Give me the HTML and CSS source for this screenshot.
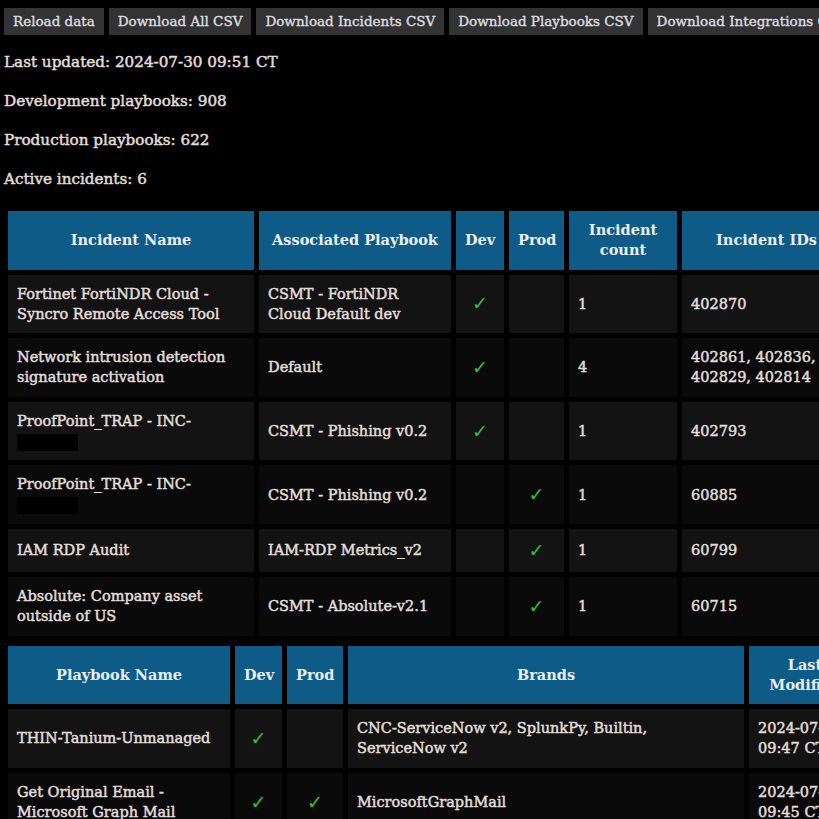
FILE: index.html
```html
<!DOCTYPE html>
<html lang="en">
<head>
<meta charset="utf-8">
<title>Playbook Dashboard</title>
<link rel="stylesheet" href="styles.css">
</head>
<body>
<div class="toolbar">
  <button class="btn">Reload data</button>
  <button class="btn">Download All CSV</button>
  <button class="btn">Download Incidents CSV</button>
  <button class="btn">Download Playbooks CSV</button>
  <button class="btn">Download Integrations CSV</button>
</div>
<p class="stat">Last updated: 2024-07-30 09:51 CT</p>
<p class="stat">Development playbooks: 908</p>
<p class="stat">Production playbooks: 622</p>
<p class="stat">Active incidents: 6</p>

<table class="grid grid-incidents">
  <thead>
    <tr>
      <th class="c-name">Incident Name</th>
      <th class="c-pb">Associated Playbook</th>
      <th class="c-dev">Dev</th>
      <th class="c-prod">Prod</th>
      <th class="c-count">Incident count</th>
      <th class="c-ids">Incident IDs</th>
    </tr>
  </thead>
  <tbody>
    <tr>
      <td>Fortinet FortiNDR Cloud - Syncro Remote Access Tool</td>
      <td>CSMT - FortiNDR Cloud Default dev</td>
      <td class="chk"><span class="tick">✓</span></td>
      <td class="chk"></td>
      <td>1</td>
      <td>402870</td>
    </tr>
    <tr>
      <td>Network intrusion detection signature activation</td>
      <td>Default</td>
      <td class="chk"><span class="tick">✓</span></td>
      <td class="chk"></td>
      <td>4</td>
      <td>402861, 402836, 402829, 402814</td>
    </tr>
    <tr>
      <td>ProofPoint_TRAP - INC-<span class="redact"></span></td>
      <td>CSMT - Phishing v0.2</td>
      <td class="chk"><span class="tick">✓</span></td>
      <td class="chk"></td>
      <td>1</td>
      <td>402793</td>
    </tr>
    <tr>
      <td>ProofPoint_TRAP - INC-<span class="redact"></span></td>
      <td>CSMT - Phishing v0.2</td>
      <td class="chk"></td>
      <td class="chk"><span class="tick">✓</span></td>
      <td>1</td>
      <td>60885</td>
    </tr>
    <tr>
      <td>IAM RDP Audit</td>
      <td>IAM-RDP Metrics_v2</td>
      <td class="chk"></td>
      <td class="chk"><span class="tick">✓</span></td>
      <td>1</td>
      <td>60799</td>
    </tr>
    <tr>
      <td>Absolute: Company asset outside of US</td>
      <td>CSMT - Absolute-v2.1</td>
      <td class="chk"></td>
      <td class="chk"><span class="tick">✓</span></td>
      <td>1</td>
      <td>60715</td>
    </tr>
  </tbody>
</table>

<table class="grid grid-playbooks">
  <thead>
    <tr>
      <th class="p-name">Playbook Name</th>
      <th class="p-dev">Dev</th>
      <th class="p-prod">Prod</th>
      <th class="p-brands">Brands</th>
      <th class="p-mod">Last Modified</th>
    </tr>
  </thead>
  <tbody>
    <tr>
      <td>THIN-Tanium-Unmanaged</td>
      <td class="chk"><span class="tick">✓</span></td>
      <td class="chk"></td>
      <td>CNC-ServiceNow v2, SplunkPy, Builtin, ServiceNow v2</td>
      <td>2024-07-30 09:47 CT</td>
    </tr>
    <tr>
      <td>Get Original Email - Microsoft Graph Mail</td>
      <td class="chk"><span class="tick">✓</span></td>
      <td class="chk"><span class="tick">✓</span></td>
      <td>MicrosoftGraphMail</td>
      <td>2024-07-30 09:45 CT</td>
    </tr>
    <tr>
      <td>Block Indicators - Generic v3</td>
      <td class="chk"><span class="tick">✓</span></td>
      <td class="chk"><span class="tick">✓</span></td>
      <td>Builtin</td>
      <td>2024-07-30 09:41 CT</td>
    </tr>
  </tbody>
</table>
</body>
</html>
```

FILE: styles.css
```css
html, body {
  background: #000;
}
body {
  margin: 0;
  padding: 8px 4px;
  color: #e0ddd8;
  font-family: "DejaVu Serif", "Liberation Serif", serif;
  font-size: 14.5px;
  -webkit-text-stroke: 0.5px currentColor;
}
.toolbar {
  display: flex;
  gap: 5px;
  margin-bottom: 1px;
}
.btn {
  flex-shrink: 0;
  background: #333;
  color: #dcdce0;
  border: none;
  border-radius: 0;
  padding: 5px 9px;
  font-family: "DejaVu Serif", "Liberation Serif", serif;
  font-size: 13.5px;
  line-height: 17px;
  white-space: nowrap;
  -webkit-text-stroke: 0.4px currentColor;
}
.stat {
  margin: 15px 0;
  font-size: 15.2px;
  line-height: 24px;
}
.grid {
  border-collapse: separate;
  border-spacing: 5px;
  table-layout: fixed;
  margin-left: -1px;
}
.grid th,
.grid td {
  box-sizing: border-box;
  padding: 9px;
  line-height: 20.3px;
  vertical-align: middle;
}
.grid th {
  background: #0e5b88;
  color: #e9eef2;
  font-weight: bold;
  text-align: center;
  -webkit-text-stroke: 0;
}
.grid td {
  text-align: left;
}
.grid tbody tr:nth-child(odd) td {
  background: #131313;
}
.grid tbody tr:nth-child(even) td {
  background: #0a0a0a;
}
.grid td.chk {
  text-align: center;
  line-height: 25px;
}
.tick {
  display: inline-block;
  height: 25px;
  line-height: 25px;
  vertical-align: top;
  color: #2ec52e;
  font-family: "DejaVu Sans", sans-serif;
  font-size: 19px;
  -webkit-text-stroke: 0;
}
.redact {
  display: inline-block;
  width: 61px;
  height: 17px;
  background: #000;
  vertical-align: middle;
}

.grid-incidents { width: 853px; }
.c-name { width: 246px; }
.c-pb { width: 192px; }
.c-dev { width: 48px; }
.c-prod { width: 55px; }
.c-count { width: 108px; }
.c-ids { width: 169px; }

.grid-playbooks { width: 863px; }
.p-name { width: 222px; }
.p-dev { width: 47px; }
.p-prod { width: 56px; }
.p-brands { width: 396px; }
.p-mod { width: 112px; }
```
